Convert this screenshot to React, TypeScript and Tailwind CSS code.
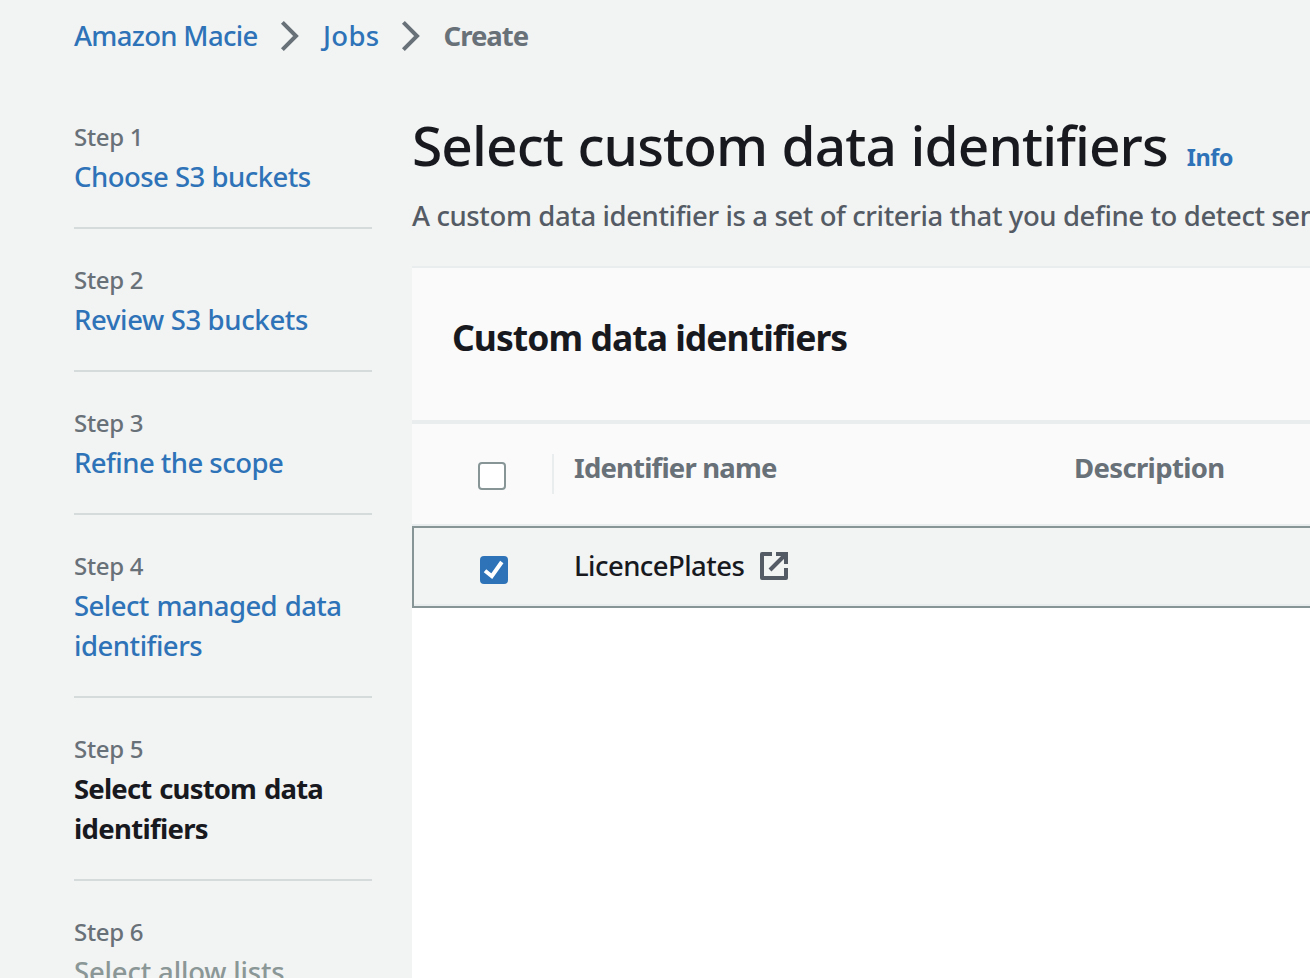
import React from 'react';

type Step = { label: string; lines: { text: string; tracking: string }[]; state: 'link' | 'active' | 'disabled' };

const steps: Step[] = [
  { label: 'Step 1', lines: [{ text: 'Choose S3 buckets', tracking: 'tracking-[-0.52px]' }], state: 'link' },
  { label: 'Step 2', lines: [{ text: 'Review S3 buckets', tracking: 'tracking-[-0.35px]' }], state: 'link' },
  { label: 'Step 3', lines: [{ text: 'Refine the scope', tracking: 'tracking-[-0.54px]' }], state: 'link' },
  {
    label: 'Step 4',
    lines: [
      { text: 'Select managed data', tracking: 'tracking-[-0.56px] [word-spacing:1px]' },
      { text: 'identifiers', tracking: 'tracking-[-0.48px]' },
    ],
    state: 'link',
  },
  {
    label: 'Step 5',
    lines: [
      { text: 'Select custom data', tracking: 'tracking-[-0.82px] [word-spacing:1.5px]' },
      { text: 'identifiers', tracking: 'tracking-[-0.68px]' },
    ],
    state: 'active',
  },
  { label: 'Step 6', lines: [{ text: 'Select allow lists', tracking: 'tracking-[-0.17px]' }], state: 'disabled' },
];

const stepColor = {
  link: 'text-[#2e73b8]',
  active: 'font-bold text-[#17191f]',
  disabled: 'text-[#8a9796]',
};

function Chevron() {
  return (
    <svg width="20" height="32" viewBox="0 0 20 32" fill="none" className="shrink-0">
      <path d="M2.4 2.4 16 16 2.4 29.6" stroke="#687078" strokeWidth="4" />
    </svg>
  );
}

function ExternalIcon() {
  return (
    <svg width="28" height="28" viewBox="0 0 28 28" fill="none" className="shrink-0">
      <path d="M12 2H2v24h24V16" stroke="#545b64" strokeWidth="4" strokeLinejoin="round" />
      <path d="M16 2h10v10" stroke="#545b64" strokeWidth="4" />
      <path d="M25 3 10 18" stroke="#545b64" strokeWidth="4" />
    </svg>
  );
}

export default function App() {
  return (
    <div className="flex h-[978px] w-[1310px] flex-col overflow-hidden bg-[#f2f3f3] font-['Noto_Sans',sans-serif] text-[27.5px] leading-10 font-medium whitespace-nowrap text-[#17191f]">
      <nav className="flex h-[71px] shrink-0 items-center pl-[74px]">
        <a className="w-[206px] tracking-[-0.68px] text-[#2e73b8]">Amazon Macie</a>
        <Chevron />
        <a className="ml-[23px] w-[78px] tracking-[0.3px] text-[#2e73b8]">Jobs</a>
        <Chevron />
        <span className="ml-[22.5px] font-bold tracking-[-1px] text-[#687078]">Create</span>
      </nav>

      <div className="flex min-h-0 flex-1">
        <aside className="w-[412px] shrink-0 pt-[46px] pl-[74px]">
          <ol className="w-[298px]">
            {steps.map((s) => (
              <li key={s.label} className="mb-[31px] border-b-2 border-[#d5dbda] pb-[30px]">
                <div className="mb-px text-[24px] leading-[39px] tracking-[-0.3px] text-[#687078]">{s.label}</div>
                <div className={stepColor[s.state]}>
                  {s.lines.map((l) => (
                    <div key={l.text} className={l.tracking}>{l.text}</div>
                  ))}
                </div>
              </li>
            ))}
          </ol>
        </aside>

        <main className="flex min-w-0 flex-1 flex-col pt-[38px]">
          <div className="flex items-baseline">
            <h1 className="text-[55px] leading-[72px] tracking-[-0.88px] [word-spacing:1px]">Select custom data identifiers</h1>
            <a className="ml-[19px] text-[23.5px] font-bold tracking-[-0.5px] text-[#2e73b8]">Info</a>
          </div>
          <p className="mt-[15px] h-[70px] shrink-0 tracking-[-0.39px] text-[#545b64]">
            A custom data identifier is a set of criteria that you define to detect sensitive data
          </p>

          <section className="flex-1 border-t-2 border-[#eaeded] bg-white">
            <header className="h-[156px] border-b-4 border-[#eaeded] bg-[#fafafa] pt-[45px] pl-10">
              <h2 className="text-[35.5px] leading-[48px] font-bold tracking-[-0.96px]">Custom data identifiers</h2>
            </header>
            <div className="flex h-[102px] border-b-2 border-[#eaeded] bg-[#fafafa] font-bold text-[#687078]">
              <div className="flex w-[142px] items-start justify-between pt-[30px] pl-[66px]">
                <span className="mt-2 size-7 rounded-[4px] border-2 border-[#879596] bg-white" />
                <span className="h-10 w-[2px] bg-[#eaeded]" />
              </div>
              <div className="w-[500px] pt-[24px] pl-[20px] tracking-[-0.82px]">Identifier name</div>
              <div className="pt-[24px] pl-[20px] tracking-[-0.65px]">Description</div>
            </div>
            <div className="h-[82px] border-y-2 border-l-2 border-[#879596] bg-[#f2f3f3]">
              <div className="flex h-[78px] border-b-2 border-[#eaeded]">
                <div className="w-[160px] pt-7 pl-[66px]">
                  <svg width="28" height="28" viewBox="0 0 28 28" fill="none">
                    <rect width="28" height="28" rx="4" fill="#2e73b8" />
                    <path d="M5 14.8 11.8 20.2 21.8 6" stroke="#fff" strokeWidth="4" />
                  </svg>
                </div>
                <div className="w-[186px] pt-[18px] tracking-[-0.56px]">LicencePlates</div>
                <div className="pt-6"><ExternalIcon /></div>
              </div>
            </div>
          </section>
        </main>
      </div>
    </div>
  );
}
